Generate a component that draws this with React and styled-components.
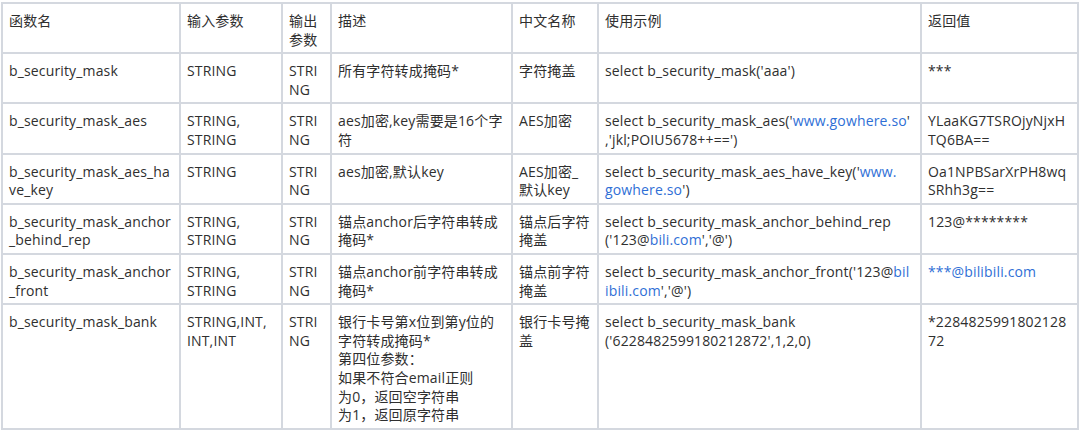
import React from "react";
import styled, { createGlobalStyle } from "styled-components";

const Global = createGlobalStyle`
  html, body { margin: 0; padding: 0; background: #ffffff; }
  body {
    font-family: "Open Sans", "Noto Sans CJK SC", sans-serif;
    color: #333333;
  }
`;

const Page = styled.div`
  width: 1080px;
  height: 433px;
  padding: 2px 0 0 1px;
  box-sizing: border-box;
  background: #ffffff;
`;

const Table = styled.table`
  border-collapse: collapse;
  table-layout: fixed;
  width: 1077px;
`;

const Cell = styled.td`
  border: 2px solid #d4d8df;
  vertical-align: top;
  text-align: left;
  font-weight: 400;
  padding: 8px 6px 3px 6px;
  font-size: 14px;
  line-height: 18.6px;
  letter-spacing: 0.15px;
  color: #2f2f2f;
  box-sizing: border-box;
`;

const Line = styled.div`
  white-space: nowrap;
`;

const Link = styled.span`
  color: #2f6fd6;
`;

const widths = [178, 102, 49, 181, 86, 323, 157];

const header = [
  ["函数名"],
  ["输入参数"],
  ["输出", "参数"],
  ["描述"],
  ["中文名称"],
  ["使用示例"],
  ["返回值"],
];

const rows = [
  [
    ["b_security_mask"],
    ["STRING"],
    ["STRI", "NG"],
    ["所有字符转成掩码*"],
    ["字符掩盖"],
    ["select b_security_mask('aaa')"],
    ["***"],
  ],
  [
    ["b_security_mask_aes"],
    ["STRING,", "STRING"],
    ["STRI", "NG"],
    ["aes加密,key需要是16个字", "符"],
    ["AES加密"],
    [
      <>select b_security_mask_aes('<Link>www.gowhere.so</Link>'</>,
      ",'jkl;POIU5678++==')",
    ],
    ["YLaaKG7TSROjyNjxH", "TQ6BA=="],
  ],
  [
    ["b_security_mask_aes_ha", "ve_key"],
    ["STRING"],
    ["STRI", "NG"],
    ["aes加密,默认key"],
    ["AES加密_", "默认key"],
    [
      <>select b_security_mask_aes_have_key('<Link>www.</Link></>,
      <><Link>gowhere.so</Link>')</>,
    ],
    ["Oa1NPBSarXrPH8wq", "SRhh3g=="],
  ],
  [
    ["b_security_mask_anchor", "_behind_rep"],
    ["STRING,", "STRING"],
    ["STRI", "NG"],
    ["锚点anchor后字符串转成", "掩码*"],
    ["锚点后字符", "掩盖"],
    [
      "select b_security_mask_anchor_behind_rep",
      <>('123@<Link>bili.com</Link>','@')</>,
    ],
    ["123@********"],
  ],
  [
    ["b_security_mask_anchor", "_front"],
    ["STRING,", "STRING"],
    ["STRI", "NG"],
    ["锚点anchor前字符串转成", "掩码*"],
    ["锚点前字符", "掩盖"],
    [
      <>select b_security_mask_anchor_front('123@<Link>bil</Link></>,
      <><Link>ibili.com</Link>','@')</>,
    ],
    [<Link>***@bilibili.com</Link>],
  ],
  [
    ["b_security_mask_bank"],
    ["STRING,INT,", "INT,INT"],
    ["STRI", "NG"],
    [
      "银行卡号第x位到第y位的",
      "字符转成掩码*",
      "第四位参数：",
      "如果不符合email正则",
      "为0，返回空字符串",
      "为1，返回原字符串",
    ],
    ["银行卡号掩", "盖"],
    ["select b_security_mask_bank", "('6228482599180212872',1,2,0)"],
    ["*2284825991802128", "72"],
  ],
];

function Row({ cells, isHeader }) {
  return (
    <tr>
      {cells.map((lines, i) => (
        <Cell key={i} as={isHeader ? "th" : "td"}>
          {lines.map((l, j) => (
            <Line key={j}>{l}</Line>
          ))}
        </Cell>
      ))}
    </tr>
  );
}

export default function App() {
  return (
    <Page>
      <Global />
      <Table>
        <colgroup>
          {widths.map((w, i) => (
            <col key={i} style={{ width: w }} />
          ))}
        </colgroup>
        <thead>
          <Row cells={header} isHeader />
        </thead>
        <tbody>
          {rows.map((r, i) => (
            <Row key={i} cells={r} />
          ))}
        </tbody>
      </Table>
    </Page>
  );
}
